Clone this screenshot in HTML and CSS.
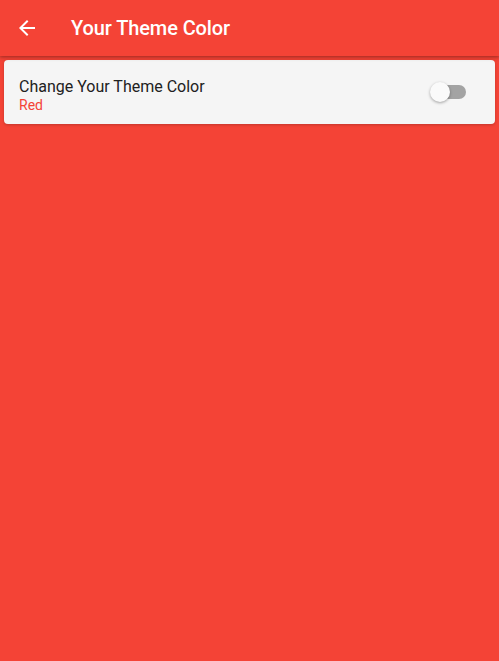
FILE: index.html
```html
<!DOCTYPE html>
<html>
<head>
<meta charset="utf-8">
<link rel="stylesheet" href="styles.css">
</head>
<body>
<header class="appbar">
  <svg class="back" width="24" height="24" viewBox="0 0 24 24"><path d="M20 11H7.83l5.59-5.59L12 4l-8 8 8 8 1.41-1.41L7.83 13H20v-2z" fill="#fff"/></svg>
  <h1 class="title">Your Theme Color</h1>
</header>
<main class="content">
  <div class="card">
    <div class="texts">
      <div class="primary">Change Your Theme Color</div>
      <div class="secondary">Red</div>
    </div>
    <div class="switch">
      <div class="track"></div>
      <div class="thumb"></div>
    </div>
  </div>
</main>
</body>
</html>
```
FILE: styles.css
```css
html, body {
  margin: 0;
  padding: 0;
  height: 100%;
}
body {
  background: #f44336;
  font-family: Roboto, "Noto Sans", sans-serif;
}
.appbar {
  height: 56px;
  display: flex;
  align-items: center;
  padding: 0 16px;
  box-sizing: border-box;
  box-shadow: 0 2px 4px rgba(0,0,0,0.2), 0 1px 2px rgba(0,0,0,0.14);
  position: relative;
}
.back {
  display: block;
  margin-left: -1px;
}
.title {
  margin: 0 0 0 32px;
  font-size: 20px;
  font-weight: 500;
  color: #fff;
  letter-spacing: -0.1px;
}
.content {
  padding: 4px;
}
.card {
  background: #f5f5f5;
  border-radius: 4px;
  height: 64px;
  display: flex;
  align-items: center;
  padding: 0 16px 0 15px;
  box-shadow: 0 1px 3px rgba(0,0,0,0.2);
}
.texts {
  flex: 1;
  padding-top: 5px;
}
.primary {
  font-size: 16px;
  color: #212121;
  line-height: 20px;
}
.secondary {
  font-size: 14px;
  color: #f44336;
  line-height: 16px;
}
.switch {
  position: relative;
  width: 36px;
  height: 20px;
  margin-right: 13px;
}
.track {
  position: absolute;
  left: 2px;
  top: 3px;
  width: 34px;
  height: 14px;
  border-radius: 7px;
  background: #a3a3a3;
}
.thumb {
  position: absolute;
  left: 0;
  top: 0;
  width: 20px;
  height: 20px;
  border-radius: 50%;
  background: #fafafa;
  box-shadow: 0 1px 3px rgba(0,0,0,0.35);
}
```
